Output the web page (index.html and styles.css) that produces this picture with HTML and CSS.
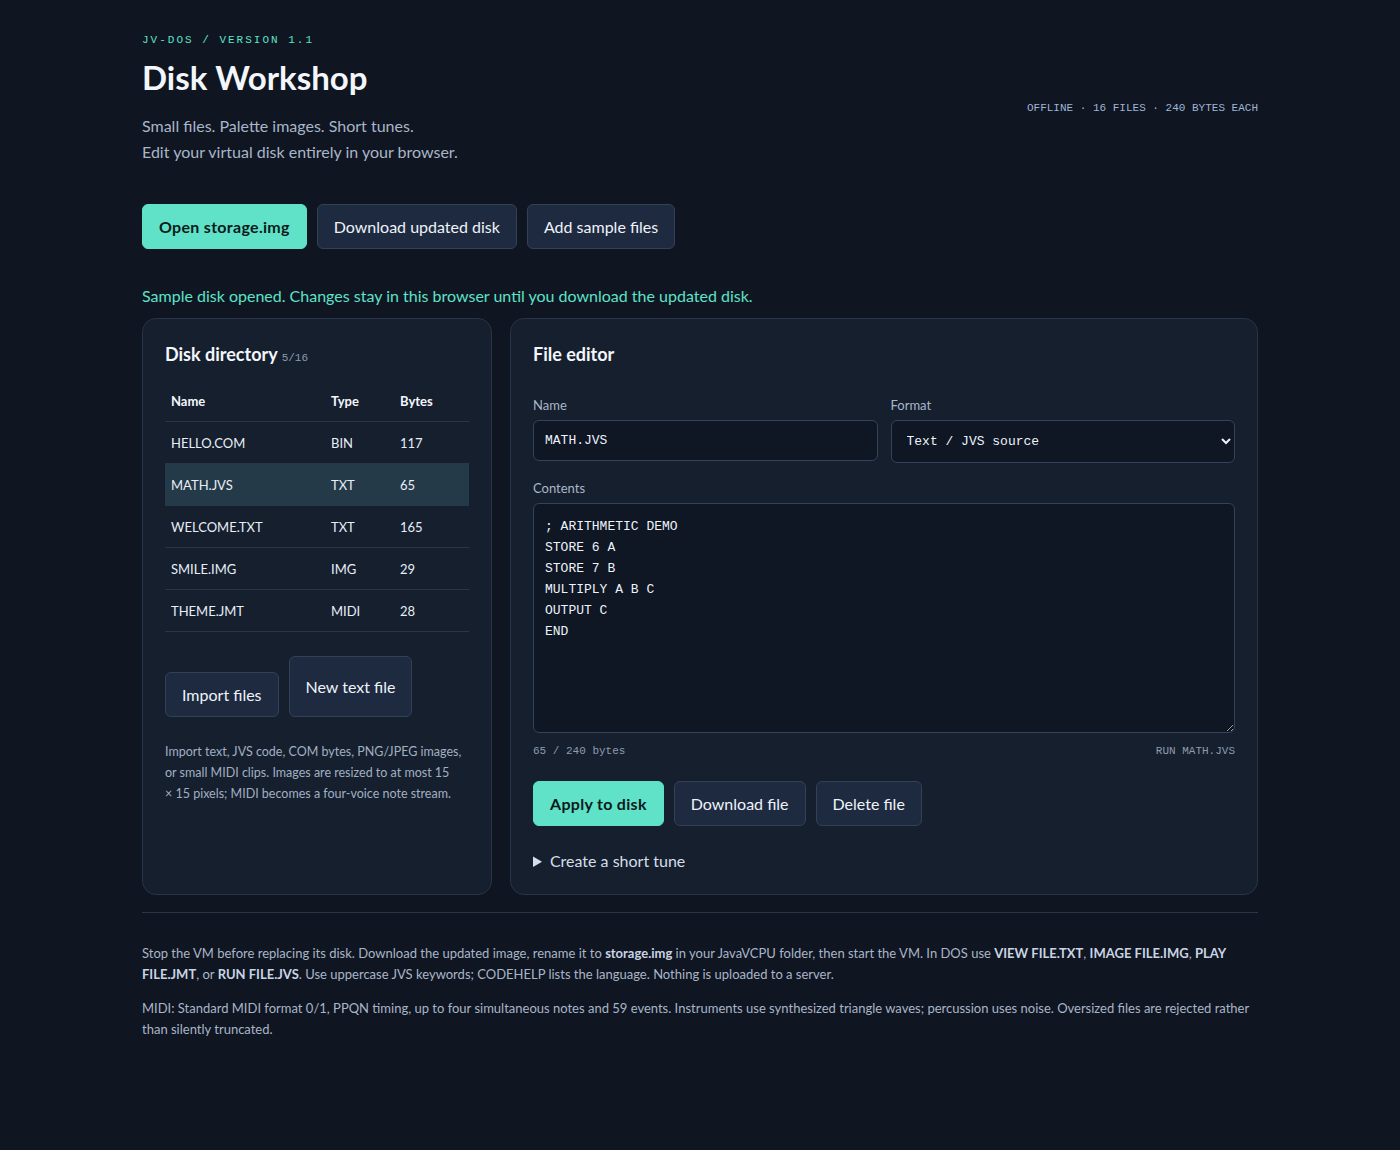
FILE: index.html
```html
<!DOCTYPE html>
<html lang="en">
<head>
    <meta charset="UTF-8">
    <meta name="viewport" content="width=device-width, initial-scale=1.0">
    <title>Disk Workshop - JV-DOS</title>
    <link rel="stylesheet" href="styles.css">
</head>
<body>
    <main class="page">
        <header class="top">
            <div>
                <div class="eyebrow">JV-DOS / VERSION 1.1</div>
                <h1>Disk Workshop</h1>
                <p class="lead">Small files. Palette images. Short tunes.<br>Edit your virtual disk entirely in your browser.</p>
            </div>
            <div class="meta">OFFLINE · 16 FILES · 240 BYTES EACH</div>
        </header>

        <div class="toolbar">
            <button class="btn primary">Open storage.img</button>
            <button class="btn">Download updated disk</button>
            <button class="btn">Add sample files</button>
        </div>

        <p class="status">Sample disk opened. Changes stay in this browser until you download the updated disk.</p>

        <div class="panels">
            <section class="panel directory">
                <h2>Disk directory <span class="count">5/16</span></h2>
                <table class="files">
                    <thead>
                        <tr><th class="c-name">Name</th><th class="c-type">Type</th><th>Bytes</th></tr>
                    </thead>
                    <tbody>
                        <tr><td>HELLO.COM</td><td>BIN</td><td>117</td></tr>
                        <tr class="selected"><td>MATH.JVS</td><td>TXT</td><td>65</td></tr>
                        <tr><td>WELCOME.TXT</td><td>TXT</td><td>165</td></tr>
                        <tr><td>SMILE.IMG</td><td>IMG</td><td>29</td></tr>
                        <tr><td>THEME.JMT</td><td>MIDI</td><td>28</td></tr>
                    </tbody>
                </table>
                <div class="side-actions">
                    <label class="btn">Import files</label>
                    <button class="btn tall">New text file</button>
                </div>
                <p class="hint">Import text, JVS code, COM bytes, PNG/JPEG images, or small MIDI clips. Images are resized to at most 15 ×&nbsp;15 pixels; MIDI becomes a four-voice note stream.</p>
            </section>

            <section class="panel editor">
                <h2>File editor</h2>
                <div class="fields">
                    <div class="field">
                        <label for="name">Name</label>
                        <input type="text" id="name" value="MATH.JVS">
                    </div>
                    <div class="field">
                        <label for="format">Format</label>
                        <select id="format">
                            <option>Text / JVS source</option>
                            <option>Binary / COM</option>
                            <option>Image</option>
                            <option>MIDI tune</option>
                        </select>
                    </div>
                </div>
                <div class="field">
                    <label for="contents">Contents</label>
                    <textarea id="contents">; ARITHMETIC DEMO
STORE 6 A
STORE 7 B
MULTIPLY A B C
OUTPUT C
END</textarea>
                </div>
                <div class="counter">
                    <span>65 / 240 bytes</span>
                    <span>RUN MATH.JVS</span>
                </div>
                <div class="toolbar">
                    <button class="btn primary">Apply to disk</button>
                    <button class="btn">Download file</button>
                    <button class="btn">Delete file</button>
                </div>
                <details class="tune">
                    <summary>Create a short tune</summary>
                </details>
            </section>
        </div>

        <footer class="notes">
            <p>Stop the VM before replacing its disk. Download the updated image, rename it to <b>storage.img</b> in your JavaVCPU folder, then start the VM. In DOS use <b>VIEW FILE.TXT</b>, <b>IMAGE FILE.IMG</b>, <b>PLAY FILE.JMT</b>, or <b>RUN FILE.JVS</b>. Use uppercase JVS keywords; CODEHELP lists the language. Nothing is uploaded to a server.</p>
            <p>MIDI: Standard MIDI format 0/1, PPQN timing, up to four simultaneous notes and 59 events. Instruments use synthesized triangle waves; percussion uses noise. Oversized files are rejected rather than silently truncated.</p>
        </footer>
    </main>
</body>
</html>
```

FILE: styles.css
```css
body {
    margin: 0;
    background: #0f1521;
    color: #e8eef7;
    font-family: "Lato", "Noto Sans", Arial, sans-serif;
    font-size: 16px;
}

.page {
    max-width: 1116px;
    margin: 0 auto;
    padding: 34px 0 60px;
}

.top {
    display: flex;
    justify-content: space-between;
    align-items: center;
}

.eyebrow {
    font-family: "Liberation Mono", monospace;
    font-size: 11px;
    letter-spacing: 2px;
    color: #5ee2c8;
}

h1 {
    margin: 11px 0 16px;
    font-size: 33px;
    font-weight: 700;
    color: #f3f6fb;
}

.lead {
    margin: 0;
    color: #a9b6c8;
    line-height: 26px;
}

.meta {
    font-family: "Liberation Mono", monospace;
    font-size: 11px;
    color: #9fb4d6;
    margin-top: 16px;
}

.toolbar {
    display: flex;
    gap: 10px;
    align-items: center;
}

.page > .toolbar {
    margin-top: 39px;
}

.btn {
    display: inline-flex;
    align-items: center;
    height: 45px;
    box-sizing: border-box;
    padding: 0 16px;
    background: #1e2a3f;
    color: #eef3fa;
    border: 1px solid #334157;
    border-radius: 6px;
    font-family: inherit;
    font-size: 16px;
    cursor: pointer;
}

.btn.primary {
    background: #5fe2c8;
    border-color: #5fe2c8;
    color: #0c1a1c;
    font-weight: 700;
    letter-spacing: 0.3px;
}

.status {
    margin: 37px 0 13px;
    color: #5ee2c8;
}

.panels {
    display: grid;
    grid-template-columns: 350px 1fr;
    gap: 18px;
}

.panel {
    background: #151f2e;
    border: 1px solid #283447;
    border-radius: 14px;
    padding: 22px 22px 24px;
}

h2 {
    margin: 2px 0 20px;
    font-size: 18px;
    font-weight: 700;
    color: #f3f6fb;
}

.editor h2 {
    margin-bottom: 32px;
}

.count {
    font-family: "Liberation Mono", monospace;
    font-size: 11px;
    font-weight: 400;
    color: #8d9bb0;
}

.files {
    width: 100%;
    border-collapse: collapse;
    font-size: 13px;
}

.files th {
    text-align: left;
    font-weight: 700;
    color: #f3f6fb;
    padding: 8px 6px 12px;
    border-bottom: 1px solid #2a3547;
}

.files td {
    padding: 0 6px;
    height: 41px;
    border-bottom: 1px solid #2a3547;
    color: #e8eef7;
}

.files .c-name { width: 148px; }
.files .c-type { width: 57px; }

.files tr.selected td {
    background: #243a48;
    border-bottom-color: #243a48;
}

.side-actions {
    display: flex;
    gap: 10px;
    align-items: flex-end;
    margin-top: 24px;
}

.btn.tall {
    height: 61px;
}

.hint {
    margin: 24px 0 0;
    font-size: 12.5px;
    line-height: 21px;
    color: #a2afc2;
}

.fields {
    display: grid;
    grid-template-columns: 1fr 1fr;
    gap: 13px;
}

.field label {
    display: block;
    font-size: 13px;
    color: #a9b6c8;
    margin: 0 0 7px;
}

input[type="text"],
select,
textarea {
    width: 100%;
    box-sizing: border-box;
    background: #0f1624;
    color: #eef3fa;
    border: 1px solid #34425a;
    border-radius: 6px;
    font-family: "Liberation Mono", monospace;
    font-size: 13px;
}

input[type="text"] {
    height: 41px;
    padding: 0 11px;
}

select {
    height: 43px;
    padding: 0 11px;
}

.fields + .field {
    margin-top: 17px;
}

textarea {
    height: 230px;
    padding: 12px 11px;
    line-height: 21px;
    resize: vertical;
    display: block;
}

.counter {
    display: flex;
    justify-content: space-between;
    margin: 12px 0 24px;
    font-family: "Liberation Mono", monospace;
    font-size: 11px;
    color: #8d9bb0;
}

.tune {
    margin-top: 25px;
    color: #d6dee9;
}

.tune summary {
    cursor: pointer;
}

.notes {
    margin-top: 17px;
    border-top: 1px solid #2a3547;
    padding-top: 17px;
    font-size: 13px;
    line-height: 21px;
    color: #a9b6c8;
}

.notes p {
    margin: 13px 0 0;
}

.notes b {
    color: #c9d4e3;
}
```
